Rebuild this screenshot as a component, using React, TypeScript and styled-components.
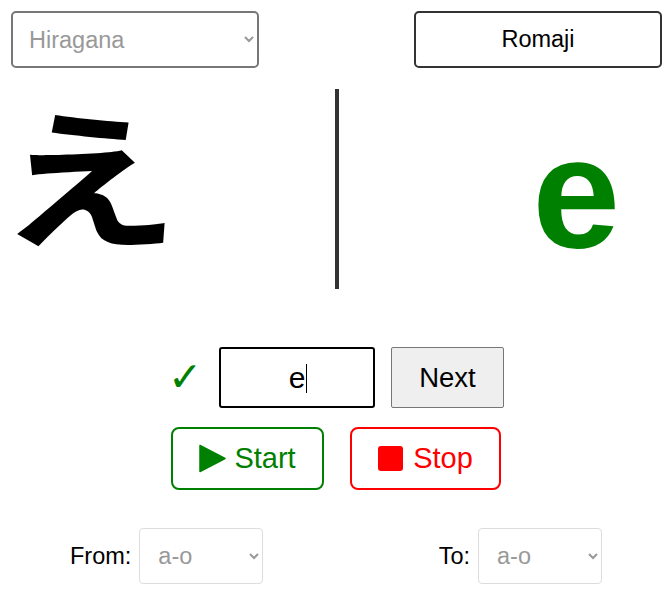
import React from "react";
import styled, { createGlobalStyle } from "styled-components";

const Global = createGlobalStyle`
  html, body { margin: 0; padding: 0; background: #fff; }
  body { font-family: "Liberation Sans", Arial, sans-serif; color: #000; }
`;

const Page = styled.div`
  width: 672px;
  height: 591px;
  box-sizing: border-box;
  padding: 11px 10px 0 11px;
  display: flex;
  flex-direction: column;
`;

const TopRow = styled.div`
  display: flex;
  justify-content: space-between;
  height: 57px;
`;

const ModeSelect = styled.select`
  width: 248px;
  height: 57px;
  box-sizing: border-box;
  border: 2px solid #777;
  border-radius: 5px;
  background: #fff;
  color: #999;
  font-family: "Liberation Sans", Arial, sans-serif;
  font-size: 23.5px;
  padding: 0 10px 0 12px;
`;

const OutlineButton = styled.button`
  width: 248px;
  height: 57px;
  box-sizing: border-box;
  border: 2px solid #333;
  border-radius: 5px;
  background: #fff;
  color: #000;
  font-family: "Liberation Sans", Arial, sans-serif;
  font-size: 23.5px;
`;

const Display = styled.div`
  margin-top: 21px;
  height: 200px;
  display: flex;
`;

const LeftPanel = styled.div`
  width: 324px;
  display: flex;
  align-items: center;
`;

const RightPanel = styled.div`
  flex: 1;
  display: flex;
  align-items: center;
  justify-content: flex-end;
  padding-right: 42px;
`;

const Kana = styled.div`
  font-family: "Noto Sans CJK JP", sans-serif;
  font-weight: 700;
  font-size: 150px;
  line-height: 1;
  transform: scaleX(1.2);
  transform-origin: left center;
  margin-top: -34px;
  margin-left: -12px;
`;

const Latin = styled.div`
  font-family: "Liberation Sans", Arial, sans-serif;
  font-weight: 700;
  font-size: 158px;
  line-height: 1;
  color: #008000;
  margin-top: 6px;
`;

const Divider = styled.div`
  width: 4px;
  background: #333;
`;

const AnswerRow = styled.div`
  margin-top: 58px;
  display: flex;
  justify-content: center;
  align-items: center;
  gap: 16px;
  height: 61px;
  padding-left: 3px;
`;

const Check = styled.span`
  color: #008000;
  font-size: 41px;
  font-family: "DejaVu Sans", sans-serif;
  margin-left: -4px;
  margin-right: 1px;
  width: 34px;
  line-height: 1;
`;

const AnswerBox = styled.div`
  width: 156px;
  height: 61px;
  box-sizing: border-box;
  border: 2px solid #000;
  border-radius: 3px;
  display: flex;
  align-items: center;
  justify-content: center;
  font-size: 30px;
  padding-left: 2px;
`;

const Caret = styled.span`
  display: inline-block;
  width: 1px;
  height: 29px;
  background: #000;
  margin-left: 1px;
  margin-top: 2px;
`;

const NextButton = styled.button`
  width: 113px;
  height: 61px;
  box-sizing: border-box;
  border: 1px solid #767676;
  border-radius: 2px;
  background: #efefef;
  color: #000;
  font-family: "Liberation Sans", Arial, sans-serif;
  font-size: 27.5px;
`;

const ControlRow = styled.div`
  margin-top: 19px;
  display: flex;
  justify-content: center;
  gap: 26px;
  padding-right: 1px;
`;

const ControlButton = styled.button<{ $color: string; $w: number }>`
  width: ${(p) => p.$w}px;
  height: 63px;
  box-sizing: border-box;
  border: 2px solid ${(p) => p.$color};
  border-radius: 8px;
  background: #fff;
  color: ${(p) => p.$color};
  font-family: "Liberation Sans", Arial, sans-serif;
  font-size: 29px;
  display: flex;
  align-items: center;
  justify-content: center;
  gap: 8px;
  padding: 0;
`;

const StopSquare = styled.span`
  display: inline-block;
  width: 25px;
  height: 25px;
  background: #f00;
  border-radius: 3px;
  margin-right: 2px;
`;

const RangeRow = styled.div`
  margin-top: 38px;
  margin-left: -11px;
  margin-right: -10px;
  padding: 0 70px;
  display: flex;
  justify-content: space-between;
`;

const RangeGroup = styled.label`
  display: flex;
  align-items: center;
  gap: 8px;
  font-size: 23.5px;
`;

const RangeSelect = styled.select<{ $w: number }>`
  width: ${(p) => p.$w}px;
  height: 56px;
  box-sizing: border-box;
  border: 1px solid #ddd;
  border-radius: 4px;
  background: #fff;
  color: #999;
  font-family: "Liberation Sans", Arial, sans-serif;
  font-size: 23.5px;
  padding: 0 10px 0 14px;
`;

export default function App() {
  return (
    <>
      <Global />
      <Page>
        <TopRow>
          <ModeSelect defaultValue="hiragana">
            <option value="hiragana">Hiragana</option>
            <option value="katakana">Katakana</option>
          </ModeSelect>
          <OutlineButton>Romaji</OutlineButton>
        </TopRow>
        <Display>
          <LeftPanel>
            <Kana>え</Kana>
          </LeftPanel>
          <Divider />
          <RightPanel>
            <Latin>e</Latin>
          </RightPanel>
        </Display>
        <AnswerRow>
          <Check>✓</Check>
          <AnswerBox>
            e<Caret />
          </AnswerBox>
          <NextButton>Next</NextButton>
        </AnswerRow>
        <ControlRow>
          <ControlButton $color="#008000" $w={153}>
            <svg width="27" height="29" viewBox="0 0 27 29">
              <path d="M1 1.5 L26 14.5 L1 27.5 Z" fill="#008000" stroke="#008000" strokeWidth="1.5" strokeLinejoin="round" />
            </svg>
            Start
          </ControlButton>
          <ControlButton $color="#ff0000" $w={151}>
            <StopSquare />
            Stop
          </ControlButton>
        </ControlRow>
        <RangeRow>
          <RangeGroup>
            From:
            <RangeSelect $w={124} defaultValue="a-o">
              <option value="a-o">a-o</option>
            </RangeSelect>
          </RangeGroup>
          <RangeGroup>
            To:
            <RangeSelect $w={124} defaultValue="a-o">
              <option value="a-o">a-o</option>
            </RangeSelect>
          </RangeGroup>
        </RangeRow>
      </Page>
    </>
  );
}
